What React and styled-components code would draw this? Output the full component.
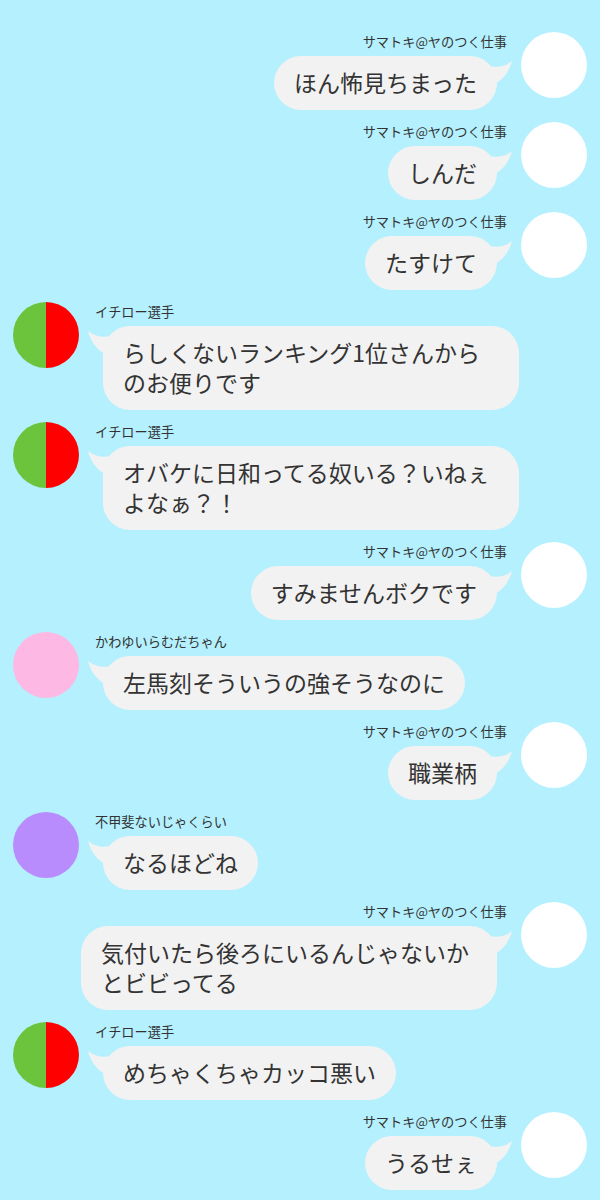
import React from "react";
import styled, { createGlobalStyle } from "styled-components";

const GlobalStyle = createGlobalStyle`
  html, body {
    margin: 0;
    padding: 0;
    background: #b4f0fd;
  }
  body {
    font-family: "Noto Sans CJK JP", "Noto Sans", sans-serif;
    color: #333;
  }
`;

const ME = "サマトキ@ヤのつく仕事";

const PEOPLE = {
  ichiro: { name: "イチロー選手", avatar: "split" },
  kawayui: { name: "かわゆいらむだちゃん", avatar: "#fdb8e4" },
  fukouhei: { name: "不甲斐ないじゃくらい", avatar: "#b98cfd" },
};

const messages = [
  { from: "me", text: "ほん怖見ちまった" },
  { from: "me", text: "しんだ" },
  { from: "me", text: "たすけて" },
  { from: "ichiro", text: "らしくないランキング1位さんからのお便りです" },
  { from: "ichiro", text: "オバケに日和ってる奴いる？いねぇよなぁ？！" },
  { from: "me", text: "すみませんボクです" },
  { from: "kawayui", text: "左馬刻そういうの強そうなのに" },
  { from: "me", text: "職業柄" },
  { from: "fukouhei", text: "なるほどね" },
  { from: "me", text: "気付いたら後ろにいるんじゃないかとビビってる" },
  { from: "ichiro", text: "めちゃくちゃカッコ悪い" },
  { from: "me", text: "うるせぇ" },
];

// speech bubble horn, mirrored for the other side
const Tail = ({ mine }) => (
  <TailSvg $mine={mine} viewBox="0 0 26 34" width="26" height="34">
    {mine ? (
      <path d="M0 10 Q13 13 23 5 Q18 24 0 31 Z" fill="#f2f2f2" />
    ) : (
      <path d="M26 10 Q13 13 3 5 Q8 24 26 31 Z" fill="#f2f2f2" />
    )}
  </TailSvg>
);

const Message = ({ from, text }) => {
  const mine = from === "me";
  const person = mine ? { name: ME, avatar: "#ffffff" } : PEOPLE[from];
  return (
    <Row $mine={mine}>
      <Avatar $split={person.avatar === "split"} $color={person.avatar} />
      <Content $mine={mine}>
        <Name $mine={mine}>{person.name}</Name>
        <Bubble $mine={mine}>
          <Tail mine={mine} />
          {text}
        </Bubble>
      </Content>
    </Row>
  );
};

const App = () => (
  <>
    <GlobalStyle />
    <Screen>
      {messages.map((m, i) => (
        <Message key={i} from={m.from} text={m.text} />
      ))}
    </Screen>
  </>
);

const Screen = styled.div`
  display: flex;
  flex-direction: column;
  gap: 12px;
  padding: 32px 13px 20px;
`;

const Row = styled.div`
  display: flex;
  flex-direction: ${(p) => (p.$mine ? "row-reverse" : "row")};
  align-items: flex-start;
  gap: 14px;
`;

const Avatar = styled.div`
  flex: 0 0 66px;
  width: 66px;
  height: 66px;
  border-radius: 50%;
  background: ${(p) =>
    p.$split
      ? "linear-gradient(to right, #6cc43c 0 50%, #ff0000 50% 100%)"
      : p.$color};
`;

const Content = styled.div`
  flex: 1;
  min-width: 0;
  display: flex;
  flex-direction: column;
  align-items: ${(p) => (p.$mine ? "flex-end" : "flex-start")};
`;

const Name = styled.div`
  margin-top: 1px;
  padding: ${(p) => (p.$mine ? "0" : "0 0 0 2px")};
  font-size: 13.2px;
  line-height: 18px;
  color: #333;
  white-space: nowrap;
`;

const Bubble = styled.div`
  position: relative;
  box-sizing: border-box;
  margin-top: 5px;
  ${(p) => (p.$mine ? "margin-right: 10px;" : "margin-left: 10px;")}
  max-width: 416px;
  padding: 11px 20px 13px;
  background: #f2f2f2;
  border-radius: 27px;
  font-size: 23px;
  line-height: 30px;
  color: #333;
`;

const TailSvg = styled.svg`
  position: absolute;
  top: 0;
  ${(p) => (p.$mine ? "right: -18px;" : "left: -18px;")}
  display: block;
`;

export default App;
